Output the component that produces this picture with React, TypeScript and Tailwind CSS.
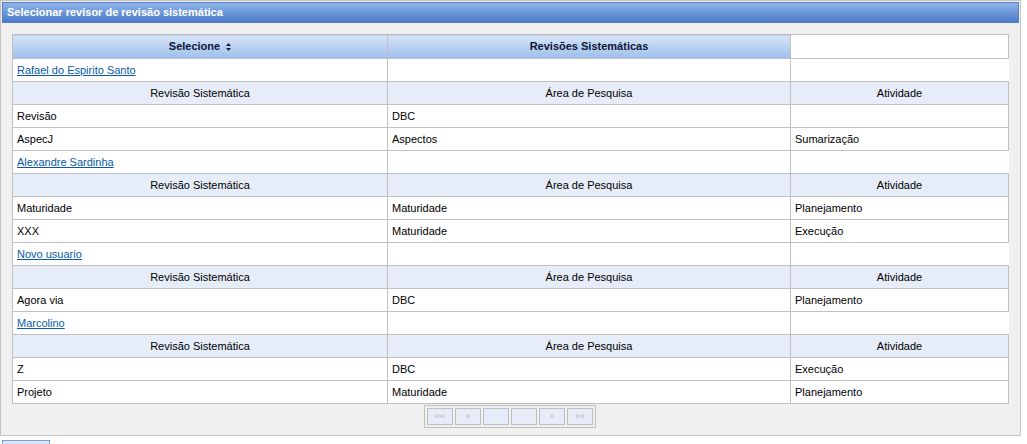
import React from "react";

// ─── Data ──────────────────────────────────────────────────────────────────────

type Revisao = { titulo: string; area: string; atividade: string };
type Revisor = { nome: string; revisoes: Revisao[] };

const REVISORES: Revisor[] = [
  {
    nome: "Rafael do Espirito Santo",
    revisoes: [
      { titulo: "Revisão", area: "DBC", atividade: "" },
      { titulo: "AspecJ", area: "Aspectos", atividade: "Sumarização" },
    ],
  },
  {
    nome: "Alexandre Sardinha",
    revisoes: [
      { titulo: "Maturidade", area: "Maturidade", atividade: "Planejamento" },
      { titulo: "XXX", area: "Maturidade", atividade: "Execução" },
    ],
  },
  {
    nome: "Novo usuario",
    revisoes: [{ titulo: "Agora via", area: "DBC", atividade: "Planejamento" }],
  },
  {
    nome: "Marcolino",
    revisoes: [
      { titulo: "Z", area: "DBC", atividade: "Execução" },
      { titulo: "Projeto", area: "Maturidade", atividade: "Planejamento" },
    ],
  },
];

const cell = "h-[23px] border border-[#c0c0c0] px-[4px] py-0 align-middle";
const sub = `${cell} bg-[#e6edf8] text-center`;

function SortIcon() {
  return (
    <svg width="5" height="8" viewBox="0 0 5 8" className="ml-[6px] inline-block align-[-1px]">
      <path d="M2.5 0 L5 3 L0 3 Z" fill="#1a1a2e" />
      <path d="M2.5 8 L5 5 L0 5 Z" fill="#1a1a2e" />
    </svg>
  );
}

function PagerButton({ label }: { label: string }) {
  return (
    <td className="p-0">
      <div className="flex h-[17px] w-[26px] items-center justify-center border border-[#c0c0c0] bg-[#e6edf8] text-[9px] text-[#b4b4b4]">
        {label}
      </div>
    </td>
  );
}

// ─── Page ──────────────────────────────────────────────────────────────────────

export default function App() {
  return (
    <div
      className="h-[444px] w-[1027px] overflow-hidden bg-white text-[11px] text-black"
      style={{ fontFamily: '"Liberation Sans", Arial, sans-serif' }}
    >
      {/* ── Panel ─────────────────────────────────────────────────── */}
      <div className="h-[436px] w-[1021px] border border-[#c4c4c4] bg-[#f0f0f0] p-px">
        <div className="flex h-[21px] items-center border border-[#5a80c0] bg-gradient-to-b from-[#8fb3e8] to-[#4b7cc9] pl-[4px] text-[11px] font-bold text-white">
          Selecionar revisor de revisão sistemática
        </div>

        <div className="pl-[10px] pt-[11px]">
          <table className="border-collapse bg-white">
            <thead>
              <tr>
                <th className="h-[24px] w-[375px] border border-[#c0c0c0] bg-gradient-to-b from-[#d8e5f8] to-[#9ebdec] text-center font-bold text-[#0b1633]">
                  Selecione
                  <SortIcon />
                </th>
                <th className="h-[24px] w-[403px] border border-[#c0c0c0] bg-gradient-to-b from-[#d8e5f8] to-[#9ebdec] text-center font-bold text-[#0b1633]">
                  Revisões Sistemáticas
                </th>
                <th className="h-[24px] w-[218px] border border-[#c0c0c0] bg-white" />
              </tr>
            </thead>
            <tbody>
              {REVISORES.map((r) => (
                <React.Fragment key={r.nome}>
                  <tr>
                    <td className={cell}>
                      <a href="#" className="text-[#0b5aa8] underline">
                        {r.nome}
                      </a>
                    </td>
                    <td className={cell} />
                  </tr>
                  <tr>
                    <td className={sub}>Revisão Sistemática</td>
                    <td className={sub}>Área de Pesquisa</td>
                    <td className={sub}>Atividade</td>
                  </tr>
                  {r.revisoes.map((rv) => (
                    <tr key={rv.titulo}>
                      <td className={cell}>{rv.titulo}</td>
                      <td className={cell}>{rv.area}</td>
                      <td className={cell}>{rv.atividade}</td>
                    </tr>
                  ))}
                </React.Fragment>
              ))}
            </tbody>
          </table>

          {/* ── Pager ──────────────────────────────────────────────── */}
          <div className="flex w-[997px] justify-center pt-[1px]">
            <table className="ml-[-1px] border-separate border-spacing-[2px] border border-[#c0c0c0]">
              <tbody>
                <tr>
                  <PagerButton label="««" />
                  <PagerButton label="«" />
                  <PagerButton label="" />
                  <PagerButton label="" />
                  <PagerButton label="»" />
                  <PagerButton label="»»" />
                </tr>
              </tbody>
            </table>
          </div>
        </div>
      </div>

      <div className="ml-[2px] mt-[4px] h-[20px] w-[48px] border border-[#7a9fd6] bg-gradient-to-b from-[#dde8f8] to-[#a8c4ee]" />
    </div>
  );
}
